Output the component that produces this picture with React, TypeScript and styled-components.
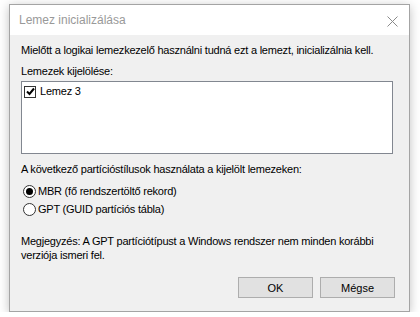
import styled, { createGlobalStyle } from 'styled-components';

const GlobalStyle = createGlobalStyle`
  html, body {
    margin: 0;
    padding: 0;
    background: #ffffff;
  }
  body {
    font-family: "Liberation Sans", Arial, sans-serif;
    font-size: 11px;
    letter-spacing: -0.22px;
    color: #000;
  }
`;

function CloseIcon() {
  return (
    <svg width="11" height="11" viewBox="0 0 11 11">
      <path d="M0.5 0.5 L10.5 10.5 M10.5 0.5 L0.5 10.5" stroke="#8a8a8a" strokeWidth="1" fill="none" />
    </svg>
  );
}

function CheckMark() {
  return (
    <svg width="9" height="9" viewBox="0 0 9 9">
      <path d="M1 4.5 L3.5 7 L8 1.5" stroke="#000" strokeWidth="2" fill="none" />
    </svg>
  );
}

export default function App() {
  return (
    <>
      <GlobalStyle />
      <Window>
        <TitleBar>
          <Title>Lemez inicializálása</Title>
          <CloseButton>
            <CloseIcon />
          </CloseButton>
        </TitleBar>
        <Content>
          <Intro>Mielőtt a logikai lemezkezelő használni tudná ezt a lemezt, inicializálnia kell.</Intro>
          <Label>Lemezek kijelölése:</Label>
          <ListBox>
            <ListItem>
              <CheckBox>
                <CheckMark />
              </CheckBox>
              Lemez 3
            </ListItem>
          </ListBox>
          <Label $top={9}>A következő partícióstílusok használata a kijelölt lemezeken:</Label>
          <RadioGroup>
            <RadioRow>
              <Radio $checked />
              MBR (fő rendszertöltő rekord)
            </RadioRow>
            <RadioRow>
              <Radio />
              GPT (GUID partíciós tábla)
            </RadioRow>
          </RadioGroup>
          <Note>
            Megjegyzés: A GPT partíciótípust a Windows rendszer nem minden korábbi
            <br />
            verziója ismeri fel.
          </Note>
          <Buttons>
            <Button>OK</Button>
            <Button>Mégse</Button>
          </Buttons>
        </Content>
      </Window>
    </>
  );
}

const Window = styled.div`
  margin: 4px 0 0 9px;
  width: 401px;
  height: 308px;
  box-sizing: border-box;
  border: 1px solid #a4a4a4;
  box-shadow: 0 2px 10px rgba(0, 0, 0, 0.25);
  display: flex;
  flex-direction: column;
  background: #f0f0f0;
`;

const TitleBar = styled.div`
  height: 30px;
  flex: none;
  background: #ffffff;
  display: flex;
  align-items: center;
  justify-content: space-between;
  padding: 0 11px 0 9px;
`;

const Title = styled.span`
  font-family: "Liberation Sans", Arial, sans-serif;
  font-size: 12px;
  letter-spacing: 0;
  color: #999999;
`;

const CloseButton = styled.div`
  width: 11px;
  height: 11px;
  display: flex;
  margin-top: 2px;
`;

const Content = styled.div`
  flex: 1;
  display: flex;
  flex-direction: column;
  padding: 9px 14px 0 11px;
`;

const Intro = styled.div`
  line-height: 13px;
  white-space: nowrap;
`;

const Label = styled.div<{ $top?: number }>`
  line-height: 13px;
  margin-top: ${(p) => p.$top ?? 8}px;
  white-space: nowrap;
`;

const ListBox = styled.div`
  margin-top: 3px;
  width: 372px;
  height: 73px;
  box-sizing: border-box;
  border: 1px solid #828790;
  background: #ffffff;
  padding: 3px 2px;
`;

const ListItem = styled.div`
  display: flex;
  align-items: center;
  gap: 4px;
  line-height: 13px;
`;

const CheckBox = styled.span`
  width: 12px;
  height: 12px;
  box-sizing: border-box;
  border: 1px solid #333333;
  background: #ffffff;
  display: flex;
  align-items: center;
  justify-content: center;
`;

const RadioGroup = styled.div`
  margin-top: 6px;
  display: flex;
  flex-direction: column;
`;

const RadioRow = styled.div`
  height: 18px;
  display: flex;
  align-items: center;
  gap: 2px;
  padding-left: 2px;
`;

const Radio = styled.span<{ $checked?: boolean }>`
  width: 13px;
  height: 13px;
  box-sizing: border-box;
  border: 1px solid #333333;
  border-radius: 50%;
  background: #ffffff;
  display: flex;
  align-items: center;
  justify-content: center;
  &::after {
    content: '';
    width: 7px;
    height: 7px;
    border-radius: 50%;
    background: ${(p) => (p.$checked ? '#000' : 'transparent')};
  }
`;

const Note = styled.div`
  margin-top: 16px;
  line-height: 14px;
  white-space: nowrap;
`;

const Buttons = styled.div`
  margin-top: 15px;
  display: flex;
  justify-content: flex-end;
  gap: 7px;
`;

const Button = styled.button`
  width: 75px;
  height: 21px;
  box-sizing: border-box;
  border: 1px solid #adadad;
  background: #e1e1e1;
  font-family: "Liberation Sans", Arial, sans-serif;
  font-size: 11px;
  color: #000;
  padding: 0;
`;
